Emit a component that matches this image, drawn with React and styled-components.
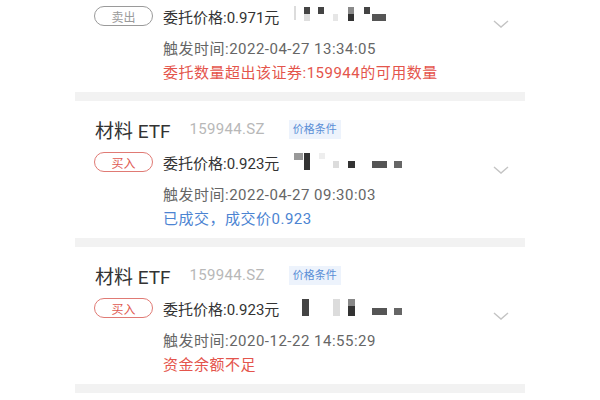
import React from "react";
import styled, { createGlobalStyle } from "styled-components";

const Global = createGlobalStyle`
  html, body { margin: 0; padding: 0; background: #fff; }
  body { font-family: Roboto, "Noto Sans CJK SC", sans-serif; overflow: hidden; }
`;

const Page = styled.div`
  width: 450px;
  margin: 0 auto;
  display: flex;
  flex-direction: column;
`;

const Card = styled.div`
  display: flex;
  flex-direction: column;
  padding: ${(p) => (p.$partial ? "5px" : "17px")} 16px 8px 20px;
  height: ${(p) => (p.$partial ? "92px" : "137px")};
  box-sizing: border-box;
`;

const Separator = styled.div`
  height: 9px;
  background: #f2f2f2;
`;

const Header = styled.div`
  display: flex;
  align-items: center;
  height: 22px;
  margin-bottom: 11px;
`;

const Title = styled.span`
  font-size: 19px;
  color: #333;
  white-space: pre;
`;

const Code = styled.span`
  font-size: 15px;
  color: #b8b8b8;
  margin-left: 19px;
  letter-spacing: 0.3px;
`;

const Tag = styled.span`
  margin-left: 24px;
  font-size: 11px;
  line-height: 19px;
  padding: 0 4px;
  background: #edf3fc;
  color: #5b8fd6;
`;

const Body = styled.div`
  display: flex;
  align-items: flex-start;
`;

const Badge = styled.span`
  width: 59px;
  height: 20px;
  box-sizing: border-box;
  margin-top: 1px;
  margin-left: -1px;
  border-radius: 10px;
  border: 1px solid ${(p) => (p.$sell ? "#9a9a9a" : "#e07a74")};
  color: ${(p) => (p.$sell ? "#9a9a9a" : "#e05a52")};
  font-size: 12px;
  display: flex;
  align-items: center;
  justify-content: center;
  flex-shrink: 0;
`;

const Lines = styled.div`
  flex: 1;
  display: flex;
  flex-direction: column;
  margin-left: 10px;
`;

const PriceRow = styled.div`
  display: flex;
  align-items: center;
  height: 22px;
  font-size: 15px;
  color: #333;
  margin-bottom: 11px;
`;

const Mosaic = styled.svg`
  margin-left: 13px;
  flex-shrink: 0;
`;

const Line = styled.div`
  font-size: 15px;
  line-height: 22px;
  height: 22px;
  letter-spacing: 0.5px;
  color: ${(p) => p.$color || "#666"};
  margin-bottom: 2px;
  white-space: nowrap;
`;

const Chevron = styled.svg`
  margin-top: 15px;
  flex-shrink: 0;
`;

const mosaics = [
  [
    [2, 0, 2, 14, "#dcdcdc"],
    [12, 1, 6, 7, "#444"],
    [12, 8, 6, 7, "#dedede"],
    [26, 1, 6, 7, "#444"],
    [41, 8, 5, 7, "#e6e6e6"],
    [56, 1, 6, 7, "#8a8a8a"],
    [56, 8, 6, 7, "#333"],
    [72, 1, 6, 7, "#444"],
    [80, 8, 14, 7, "#555"],
  ],
  [
    [2, 1, 9, 7, "#999"],
    [12, 1, 6, 17, "#333"],
    [27, 1, 6, 6, "#eee"],
    [41, 9, 6, 7, "#dcdcdc"],
    [56, 9, 7, 7, "#333"],
    [80, 9, 15, 7, "#555"],
    [102, 9, 8, 7, "#666"],
  ],
  [
    [10, 1, 7, 17, "#444"],
    [41, 1, 7, 17, "#dcdcdc"],
    [56, 1, 7, 7, "#888"],
    [56, 8, 7, 10, "#333"],
    [80, 10, 15, 7, "#555"],
    [102, 10, 8, 7, "#666"],
  ],
];

const items = [
  {
    partial: true,
    sell: true,
    side: "卖出",
    price: "委托价格:0.971元",
    time: "触发时间:2022-04-27 13:34:05",
    status: "委托数量超出该证券:159944的可用数量",
    color: "#e4554c",
  },
  {
    title: "材料 ETF",
    sell: false,
    side: "买入",
    price: "委托价格:0.923元",
    time: "触发时间:2022-04-27 09:30:03",
    status: "已成交，成交价0.923",
    color: "#4c84d2",
  },
  {
    title: "材料 ETF",
    sell: false,
    side: "买入",
    price: "委托价格:0.923元",
    time: "触发时间:2020-12-22 14:55:29",
    status: "资金余额不足",
    color: "#e4554c",
  },
];

export default function App() {
  return (
    <>
      <Global />
      <Page>
        {items.map((it, i) => (
          <React.Fragment key={i}>
            <Card $partial={it.partial}>
              {!it.partial && (
                <Header>
                  <Title>{it.title}</Title>
                  <Code>159944.SZ</Code>
                  <Tag>价格条件</Tag>
                </Header>
              )}
              <Body>
                <Badge $sell={it.sell}>{it.side}</Badge>
                <Lines>
                  <PriceRow>
                    {it.price}
                    <Mosaic width="112" height="20" viewBox="0 0 112 20">
                      {mosaics[i].map(([x, y, w, h, c], k) => (
                        <rect key={k} x={x} y={y} width={w} height={h} fill={c} />
                      ))}
                    </Mosaic>
                  </PriceRow>
                  <Line>{it.time}</Line>
                  <Line $color={it.color}>{it.status}</Line>
                </Lines>
                <Chevron width="16" height="8" viewBox="0 0 16 8">
                  <polyline points="1,1 8,7 15,1" fill="none" stroke="#c4c4c4" strokeWidth="1.4" />
                </Chevron>
              </Body>
            </Card>
            <Separator />
          </React.Fragment>
        ))}
      </Page>
    </>
  );
}
